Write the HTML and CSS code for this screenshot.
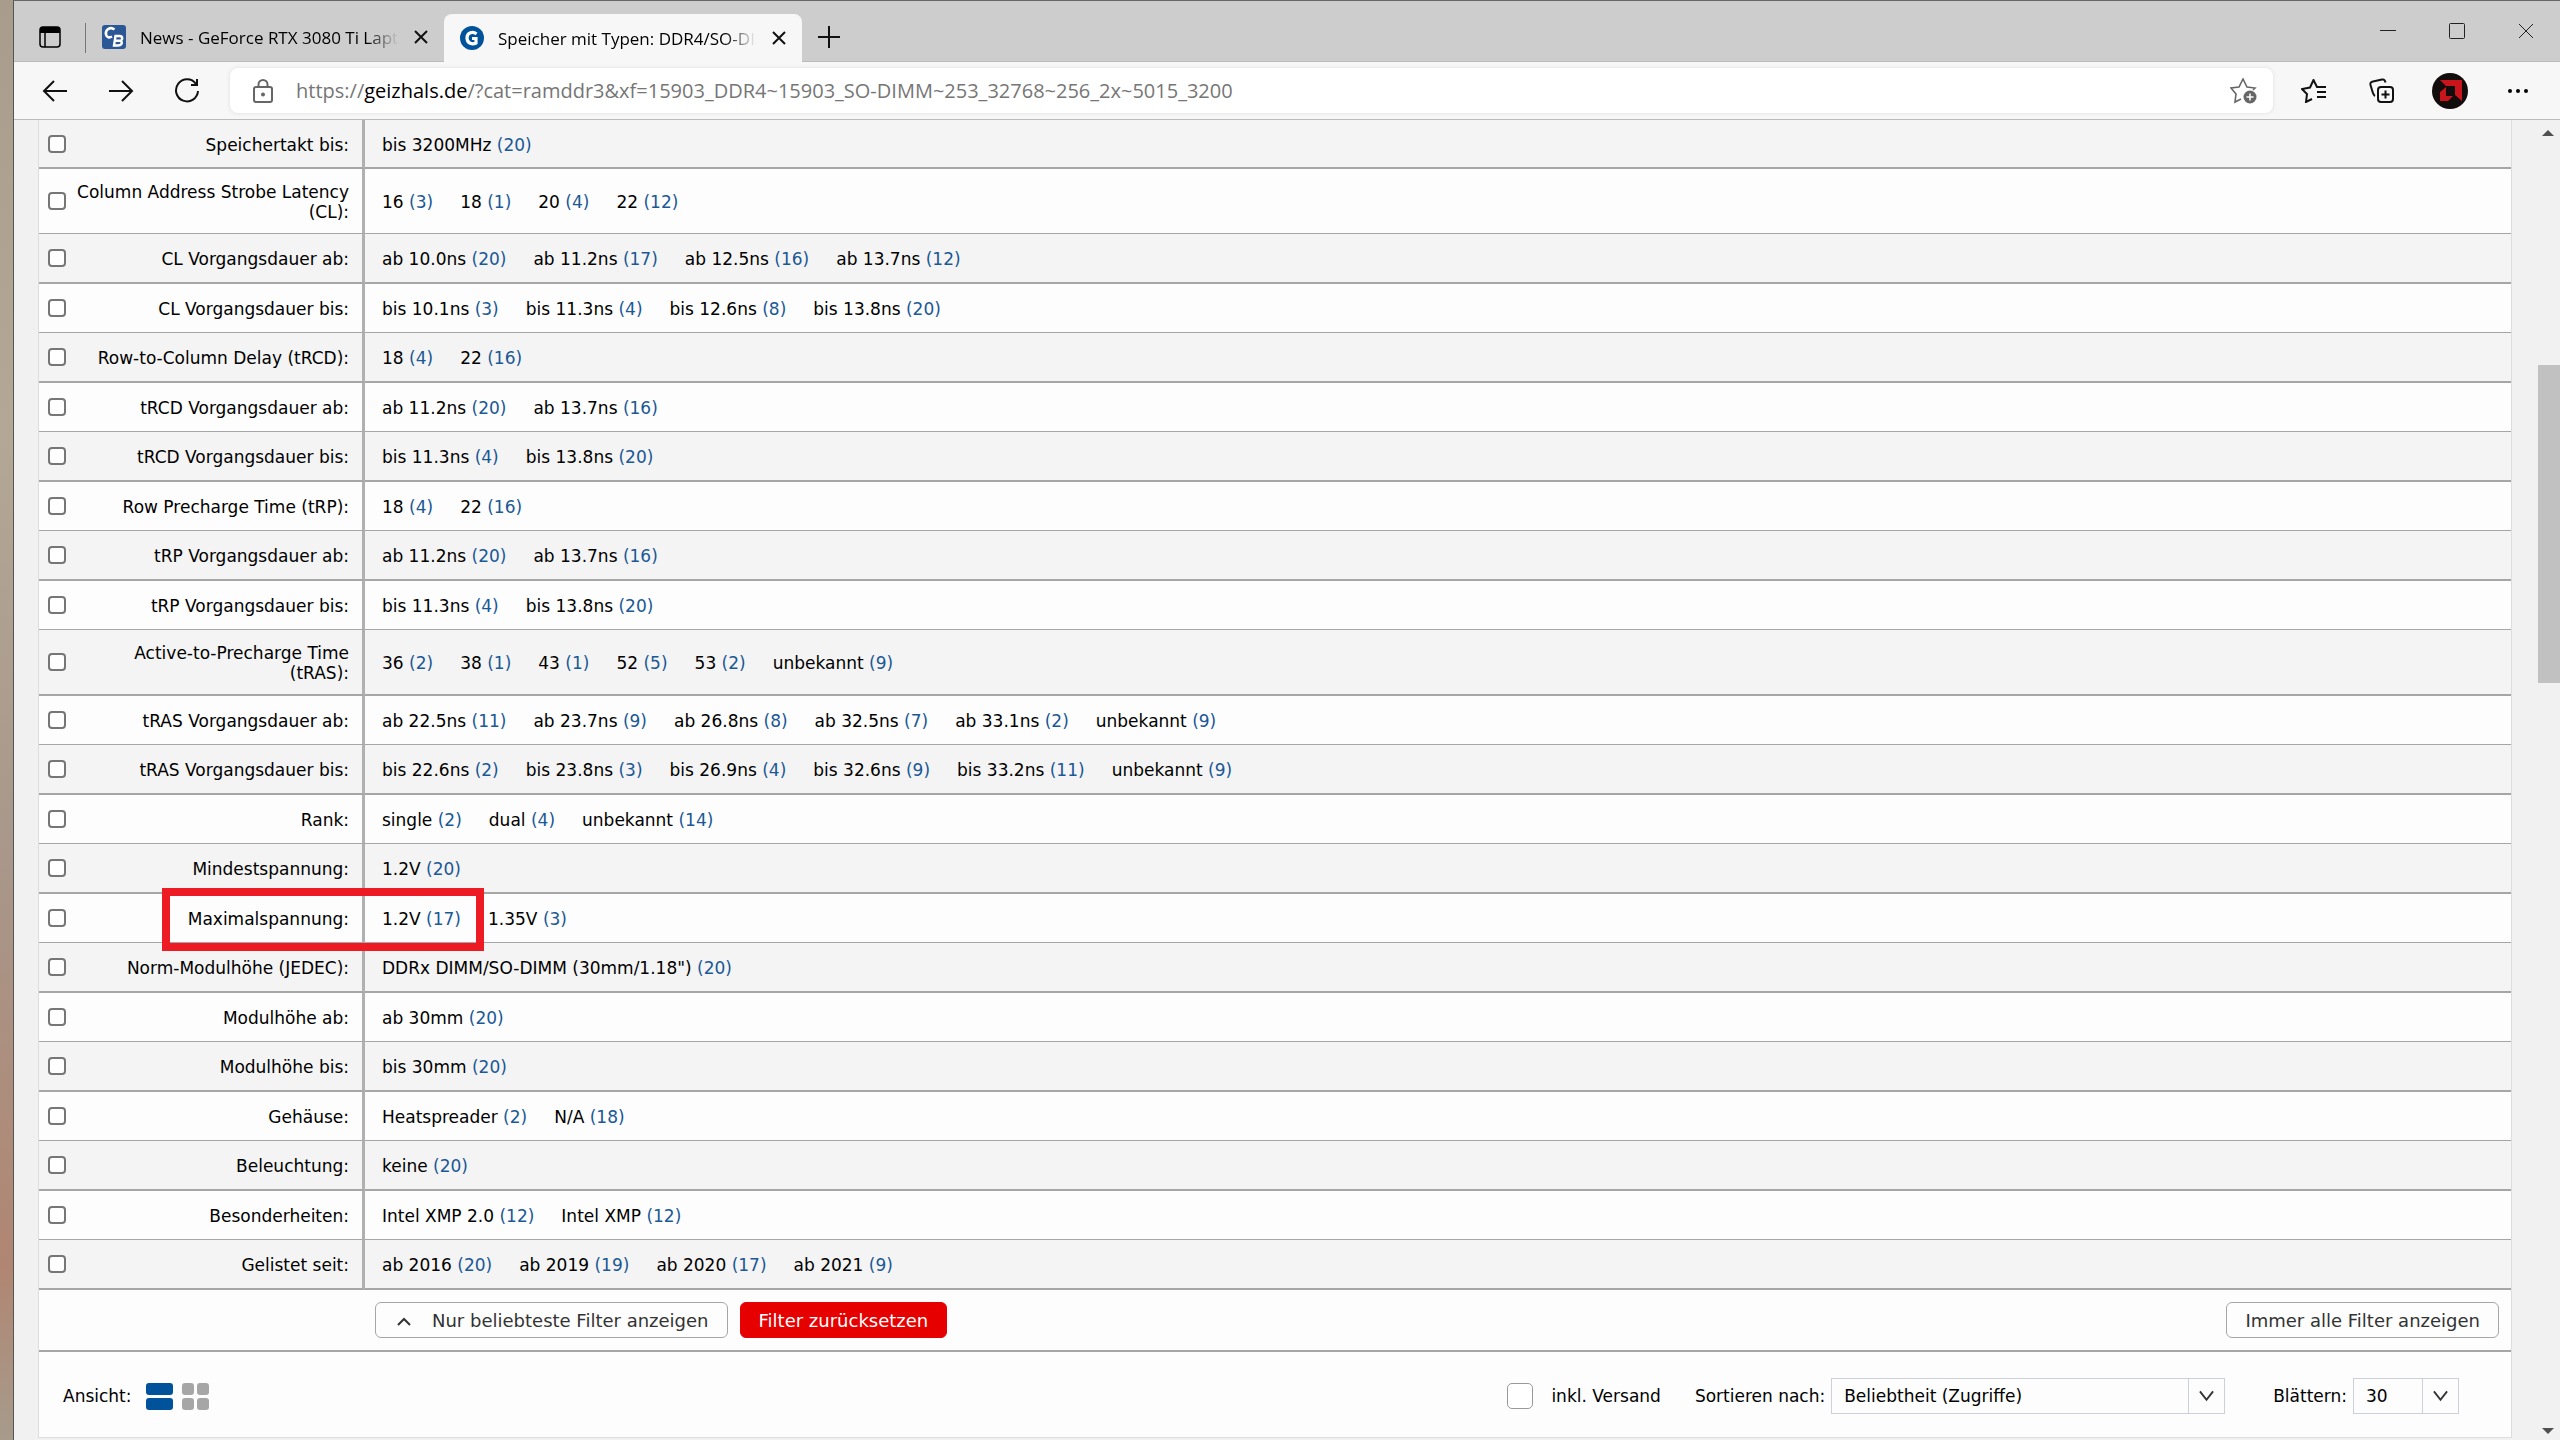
FILE: index.html
```html
<!DOCTYPE html>
<html lang="de">
<head>
    <meta charset="UTF-8">
    <meta name="viewport" content="width=device-width, initial-scale=1.0">
    <title>Speicher mit Typen: DDR4/SO-DIMM</title>
    <link rel="stylesheet" href="styles.css">
</head>
<body>
    <div class="window">
        <!-- Tab strip -->
        <header class="tabbar">
            <button class="tab-menu" type="button" aria-label="Tabs">
                <svg width="24" height="24" viewBox="0 0 24 24"><rect x="2" y="2" width="20" height="20" rx="3" fill="none" stroke="#000" stroke-width="1.500"/><path d="M2 8V5a3 3 0 0 1 3-3h14a3 3 0 0 1 3 3v3z"/><path d="M7 8v14" stroke="#000" stroke-width="1.500"/></svg>
            </button>
            <div class="tab">
                <svg class="favicon" viewBox="0 0 24 24"><rect width="24" height="24" rx="3" fill="#2b5797"/><path d="M12.500 4.500C8 1 3 5 4 9.500c.6 3 3.500 3.500 6 2" fill="none" stroke="#fff" stroke-width="2.600"/><path d="M13.500 11l-1.500 9.500h3.500c5 0 5.500-4 2.500-4.700 3-.8 3-4.800-.5-4.800zM12.500 15.800h5.500" fill="none" stroke="#fff" stroke-width="2.400"/></svg>
                <span class="tab-title">News - GeForce RTX 3080 Ti Laptop</span>
                <button class="tab-close" type="button" aria-label="Schließen"><svg width="14" height="14" viewBox="0 0 14 14"><path d="M1 1l12 12M13 1L1 13"/></svg></button>
            </div>
            <div class="tab active">
                <svg class="favicon" viewBox="0 0 24 24"><circle cx="12" cy="12" r="12" fill="#00529b"/><path d="M16.500 8C13 5 7 6.500 7 12s5.500 7 9 5v-4.500h-4" fill="none" stroke="#fff" stroke-width="3.200"/></svg>
                <span class="tab-title">Speicher mit Typen: DDR4/SO-DIMM</span>
                <button class="tab-close" type="button" aria-label="Schließen"><svg width="14" height="14" viewBox="0 0 14 14"><path d="M1 1l12 12M13 1L1 13"/></svg></button>
            </div>
            <button class="new-tab" type="button" aria-label="Neuer Tab"><svg width="22" height="22" viewBox="0 0 22 22"><path d="M11 0v22M0 11h22"/></svg></button>
            <div class="window-buttons">
                <button type="button" aria-label="Minimieren"><svg width="16" height="16" viewBox="0 0 16 16"><path d="M0 7.500h16"/></svg></button>
                <button type="button" aria-label="Maximieren"><svg width="16" height="16" viewBox="0 0 16 16"><rect x="0.500" y="0.500" width="15" height="15" rx="1"/></svg></button>
                <button type="button" aria-label="Schließen"><svg width="16" height="16" viewBox="0 0 16 16"><path d="M1 1l14 14M15 1L1 15"/></svg></button>
            </div>
        </header>

        <!-- Address bar -->
        <div class="toolbar">
            <button type="button" aria-label="Zurück"><svg width="26" height="22" viewBox="0 0 26 22"><path d="M12 1L2 11l10 10M2 11h23"/></svg></button>
            <button type="button" aria-label="Vorwärts"><svg width="26" height="22" viewBox="0 0 26 22"><path d="M14 1l10 10-10 10M24 11H1"/></svg></button>
            <button type="button" aria-label="Neu laden"><svg width="26" height="26" viewBox="0 0 26 26"><path d="M22 6A11 11 0 1 0 24 13M23 1v6h-6"/></svg></button>
            <div class="address">
                <svg class="lock" width="20" height="24" viewBox="0 0 20 24"><rect x="1" y="8" width="18" height="15" rx="2"/><path d="M5.500 8V5.500a4.500 4.500 0 0 1 9 0V8"/><circle cx="10" cy="15.500" r="1" fill="#666"/></svg>
                <a class="url" href="#">https://<b>geizhals.de</b>/?cat=ramddr3&amp;xf=15903_DDR4~15903_SO-DIMM~253_32768~256_2x~5015_3200</a>
                <svg class="fav-add" width="28" height="26" viewBox="0 0 28 26"><path d="M11 21l-6 3 1-8-5-6 8-1 4-8 4 8 8 1-2 2" fill="none" stroke="#666" stroke-width="1.600"/><circle cx="20" cy="19" r="6.500" fill="#666"/><path d="M20 15.500v7M16.500 19h7" stroke="#fff" stroke-width="1.500"/></svg>
            </div>
            <button type="button" aria-label="Favoriten"><svg width="26" height="24" viewBox="0 0 26 24"><path d="M11 20l-6 3 1-8-5-5 8-1.500L12.500 1 16 8h9M16 13h9M16 18h9"/></svg></button>
            <button type="button" aria-label="Sammlungen"><svg width="26" height="26" viewBox="0 0 26 26"><rect x="9" y="9" width="15" height="15" rx="3"/><path d="M16.500 12.500v8M12.500 16.500h8M6 18c-2-1-2-3-4.500-11C1 5 2 4 4 3.500L13 1.500c2-.4 3 .5 3.500 3"/></svg></button>
            <button type="button" aria-label="Profil"><svg width="36" height="36" viewBox="0 0 36 36"><g stroke="none"><circle cx="18" cy="18" r="18" fill="#130c0c"/><path d="M8 7h22v21l-7-6v-9h-9zM14 14v9h7l-5 5H8v-9z" fill="#c9141b"/></g></svg></button>
            <button type="button" aria-label="Mehr"><svg width="20" height="6" viewBox="0 0 20 6"><g fill="#000" stroke="none"><circle cx="2" cy="3" r="2"/><circle cx="10" cy="3" r="2"/><circle cx="18" cy="3" r="2"/></g></svg></button>
        </div>

        <div class="viewport">
            <main class="page">
                <table class="filters">
                    <tbody id="filter-rows"></tbody>
                </table>

                <div class="filter-actions">
                    <button class="btn" type="button"><svg width="16" height="10" viewBox="0 0 16 10"><path d="M2 8l6-6 6 6" fill="none" stroke="#333" stroke-width="2"/></svg>Nur beliebteste Filter anzeigen</button>
                    <button class="btn btn-reset" type="button">Filter zurücksetzen</button>
                    <button class="btn btn-all" type="button">Immer alle Filter anzeigen</button>
                </div>

                <div class="list-options">
                    <span>Ansicht:</span>
                    <button class="view" type="button" aria-label="Liste"><svg width="27" height="27" viewBox="0 0 27 27" fill="#00529b"><rect width="27" height="12" rx="3"/><rect y="15" width="27" height="12" rx="3"/></svg></button>
                    <button class="view" type="button" aria-label="Galerie"><svg width="27" height="27" viewBox="0 0 27 27" fill="#a6a6a6"><rect width="12" height="12" rx="3"/><rect x="15" width="12" height="12" rx="3"/><rect y="15" width="12" height="12" rx="3"/><rect x="15" y="15" width="12" height="12" rx="3"/></svg></button>
                    <input class="shipping" type="checkbox" id="shipping">
                    <label class="shipping-label" for="shipping">inkl. Versand</label>
                    <label for="sort">Sortieren nach:</label>
                    <div class="select select-sort">
                        <select id="sort"><option>Beliebtheit (Zugriffe)</option></select>
                        <svg width="16" height="12" viewBox="0 0 16 12"><path d="M1 1l7 9 7-9"/></svg>
                    </div>
                    <label for="paging">Blättern:</label>
                    <div class="select select-paging">
                        <select id="paging"><option>30</option></select>
                        <svg width="16" height="12" viewBox="0 0 16 12"><path d="M1 1l7 9 7-9"/></svg>
                    </div>
                </div>
            </main>
            <div class="scrollbar">
                <svg width="12" height="6" viewBox="0 0 12 6"><path d="M0 6l6-6 6 6z"/></svg>
                <div class="thumb"></div>
                <svg width="12" height="6" viewBox="0 0 12 6"><path d="M0 0l6 6 6-6z"/></svg>
            </div>
        </div>
    </div>
    <script src="script.js"></script>
</body>
</html>
```

FILE: styles.css
```css
* {
    margin: 0;
    padding: 0;
    box-sizing: border-box;
}

body {
    height: 100vh;
    overflow: hidden;
    padding-left: 13px;
    font-family: Verdana, "DejaVu Sans", sans-serif;
    font-size: 17px;
    color: #000;
    background: linear-gradient(#a89c8c, #b3a795 30%, #a8978a 60%, #b08672 88%, #a79b8c);
}

button {
    font: inherit;
    border: none;
    background: none;
    cursor: pointer;
}

.window {
    height: 100vh;
    display: flex;
    flex-direction: column;
    border-left: 1px solid #555;
    border-top: 1px solid #666;
    background: #f1f1f1;
}

/* Tab strip */
.tabbar {
    height: 61px;
    flex-shrink: 0;
    display: flex;
    align-items: flex-end;
    background: #cdcdcd;
    border-bottom: 1px solid #bbb;
    font-family: "Segoe UI", "Open Sans", sans-serif;
}

.tabbar svg {
    display: block;
}

.tab-menu {
    height: 48px;
    padding: 0 24px;
}

.tab {
    width: 358px;
    height: 48px;
    display: flex;
    align-items: center;
    padding: 0 16px;
    position: relative;
}

.tab:not(.active)::before {
    content: "";
    position: absolute;
    left: -1px;
    top: 10px;
    height: 30px;
    border-left: 1px solid #777;
}

.tab.active {
    background: #f7f7f7;
    border-radius: 8px 8px 0 0;
    margin-bottom: -1px;
}

.favicon {
    width: 24px;
    height: 24px;
    flex-shrink: 0;
}

.tab-title {
    flex: 1;
    margin: 0 16px 0 14px;
    overflow: hidden;
    white-space: nowrap;
    mask-image: linear-gradient(to right, #000 88%, transparent);
}

.tab-close path,
.new-tab path {
    fill: none;
    stroke: #111;
    stroke-width: 2;
}

.new-tab {
    height: 48px;
    padding: 0 16px;
}

.window-buttons {
    margin-left: auto;
    display: flex;
    height: 60px;
}

.window-buttons button {
    width: 69px;
    display: flex;
    align-items: center;
    justify-content: center;
}

.window-buttons svg {
    fill: none;
    stroke: #222;
}

/* Address bar */
.toolbar {
    height: 58px;
    flex-shrink: 0;
    display: flex;
    align-items: center;
    padding: 0 8px;
    background: #f7f7f7;
    border-bottom: 1px solid #bbb;
}

.toolbar button {
    width: 66px;
    display: flex;
    justify-content: center;
    fill: none;
    stroke: #111;
    stroke-width: 2;
}

.toolbar .address ~ button {
    width: 68px;
}

.address {
    flex: 1;
    height: 45px;
    margin: 0 7px 0 10px;
    padding: 0 15px 0 23px;
    display: flex;
    align-items: center;
    border-radius: 8px;
    background: #fff;
    box-shadow: 0 0 4px #ddd;
}

.lock {
    fill: none;
    stroke: #666;
    stroke-width: 2;
}

.url {
    flex: 1;
    margin-left: 23px;
    font-family: "Segoe UI", "Open Sans", sans-serif;
    font-size: 20px;
    color: #767676;
    text-decoration: none;
}

.url b {
    font-weight: 400;
    color: #000;
}

/* Page area */
.viewport {
    flex: 1;
    min-height: 0;
    display: flex;
}

.page {
    flex: 1;
    margin: 0 24px 2px;
    border: 1px solid #ddd;
    border-top: none;
    background: #fdfdfd;
}

.filters {
    width: 100%;
    border-collapse: separate;
    border-spacing: 0;
}

.filters tr {
    height: 49px;
    background: #fdfdfd;
}

.filters tr:nth-child(odd) {
    height: 50px;
    background: #f4f4f4;
}

.filters tr:first-child {
    height: 49px;
}

.filters th,
.filters td {
    border-bottom: 1px solid #a6a6a6;
    font-weight: 400;
    line-height: 20px;
    vertical-align: middle;
}

.filters tr:nth-child(odd) > * {
    border-bottom-width: 2px;
}

.filters .check {
    width: 34px;
    padding-left: 9px;
}

.check input {
    display: block;
    width: 18px;
    height: 18px;
    appearance: none;
    border: 2px solid #767676;
    border-radius: 4px;
    background: #fff;
}

.filters .name {
    width: 292px;
    padding: 2px 13px 0 2px;
    border-right: 3px solid #b0b0b0;
    text-align: right;
}

.filters .long .name {
    padding-top: 13px;
    padding-bottom: 11px;
}

.filters .values {
    padding: 2px 0 0 17px;
}

.values a {
    margin-right: 27px;
    color: #000;
    text-decoration: none;
}

.values span {
    color: #1a5896;
}

/* Outline around one filter */
.filters .marked {
    position: relative;
}

.marker {
    position: absolute;
    left: 123px;
    top: -6px;
    width: 322px;
    height: 63px;
    border: 8px solid #ed1c24;
    pointer-events: none;
}

/* Buttons below the filters */
.filter-actions {
    height: 62px;
    display: flex;
    align-items: center;
    gap: 12px;
    padding: 0 12px 0 336px;
    border-bottom: 2px solid #a6a6a6;
}

.btn {
    height: 36px;
    padding: 0 18px;
    border: 1px solid #a6a6a6;
    border-radius: 6px;
    background: #fdfdfd;
    font-size: 18px;
    color: #333;
}

.btn svg {
    margin: 0 20px 0 2px;
    vertical-align: middle;
}

.btn-reset {
    border-color: #e60000;
    background: #e60000;
    color: #fff;
}

.btn-all {
    margin-left: auto;
}

/* View and sorting */
.list-options {
    height: 86px;
    display: flex;
    align-items: center;
    padding: 2px 52px 0 24px;
}

.view {
    margin-left: 9px;
}

.view svg {
    display: block;
}

.list-options > span {
    margin-right: 5px;
}

.shipping {
    width: 26px;
    height: 26px;
    margin-left: auto;
    appearance: none;
    border: 1px solid #999;
    border-radius: 5px;
    background: #fff;
}

.shipping-label {
    margin: 0 34px 0 18px;
}

.select {
    display: flex;
    align-items: center;
    position: relative;
    height: 36px;
    margin-left: 6px;
    border: 1px solid #ccd0d8;
}

.select select {
    width: 100%;
    height: 100%;
    padding-left: 12px;
    appearance: none;
    border: none;
    background: none;
    font: inherit;
    color: #000;
}

.select svg {
    position: absolute;
    right: 0;
    width: 36px;
    height: 34px;
    padding: 11px 10px;
    border-left: 1px solid #ccd0d8;
    fill: none;
    stroke: #333;
    stroke-width: 2;
    pointer-events: none;
}

.select-sort {
    width: 394px;
    margin-right: 48px;
}

.select-paging {
    width: 106px;
}

/* Scrollbar */
.scrollbar {
    width: 24px;
    display: flex;
    flex-direction: column;
    align-items: center;
    padding: 10px 0 6px;
    fill: #505050;
}

.thumb {
    width: 22px;
    height: 318px;
    margin: 229px 0 auto;
    align-self: flex-end;
    background: #c1c1c1;
}
```

FILE: script.js
```js
const filters = [
    ['Speichertakt bis', ['bis 3200MHz', 20]],
    ['Column Address Strobe Latency (CL)', ['16', 3], ['18', 1], ['20', 4], ['22', 12]],
    ['CL Vorgangsdauer ab', ['ab 10.0ns', 20], ['ab 11.2ns', 17], ['ab 12.5ns', 16], ['ab 13.7ns', 12]],
    ['CL Vorgangsdauer bis', ['bis 10.1ns', 3], ['bis 11.3ns', 4], ['bis 12.6ns', 8], ['bis 13.8ns', 20]],
    ['Row-to-Column Delay (tRCD)', ['18', 4], ['22', 16]],
    ['tRCD Vorgangsdauer ab', ['ab 11.2ns', 20], ['ab 13.7ns', 16]],
    ['tRCD Vorgangsdauer bis', ['bis 11.3ns', 4], ['bis 13.8ns', 20]],
    ['Row Precharge Time (tRP)', ['18', 4], ['22', 16]],
    ['tRP Vorgangsdauer ab', ['ab 11.2ns', 20], ['ab 13.7ns', 16]],
    ['tRP Vorgangsdauer bis', ['bis 11.3ns', 4], ['bis 13.8ns', 20]],
    ['Active-to-Precharge Time (tRAS)', ['36', 2], ['38', 1], ['43', 1], ['52', 5], ['53', 2], ['unbekannt', 9]],
    ['tRAS Vorgangsdauer ab', ['ab 22.5ns', 11], ['ab 23.7ns', 9], ['ab 26.8ns', 8], ['ab 32.5ns', 7], ['ab 33.1ns', 2], ['unbekannt', 9]],
    ['tRAS Vorgangsdauer bis', ['bis 22.6ns', 2], ['bis 23.8ns', 3], ['bis 26.9ns', 4], ['bis 32.6ns', 9], ['bis 33.2ns', 11], ['unbekannt', 9]],
    ['Rank', ['single', 2], ['dual', 4], ['unbekannt', 14]],
    ['Mindestspannung', ['1.2V', 20]],
    ['Maximalspannung', ['1.2V', 17], ['1.35V', 3]],
    ['Norm-Modulhöhe (JEDEC)', ['DDRx DIMM/SO-DIMM (30mm/1.18")', 20]],
    ['Modulhöhe ab', ['ab 30mm', 20]],
    ['Modulhöhe bis', ['bis 30mm', 20]],
    ['Gehäuse', ['Heatspreader', 2], ['N/A', 18]],
    ['Beleuchtung', ['keine', 20]],
    ['Besonderheiten', ['Intel XMP 2.0', 12], ['Intel XMP', 12]],
    ['Gelistet seit', ['ab 2016', 20], ['ab 2019', 19], ['ab 2020', 17], ['ab 2021', 9]]
];

document.getElementById('filter-rows').innerHTML = filters.map(([name, ...values], i) => {
    const long = name.length > 30 ? ' class="long"' : '';
    const marked = name === 'Maximalspannung';
    const links = values.map(([text, count]) => `<a href="#">${text} <span>(${count})</span></a>`).join('');
    return `<tr${long}>
        <td class="check${marked ? ' marked' : ''}"><input type="checkbox" id="f${i}">${marked ? '<div class="marker"></div>' : ''}</td>
        <th class="name"><label for="f${i}">${name}:</label></th>
        <td class="values">${links}</td>
    </tr>`;
}).join('');
```
